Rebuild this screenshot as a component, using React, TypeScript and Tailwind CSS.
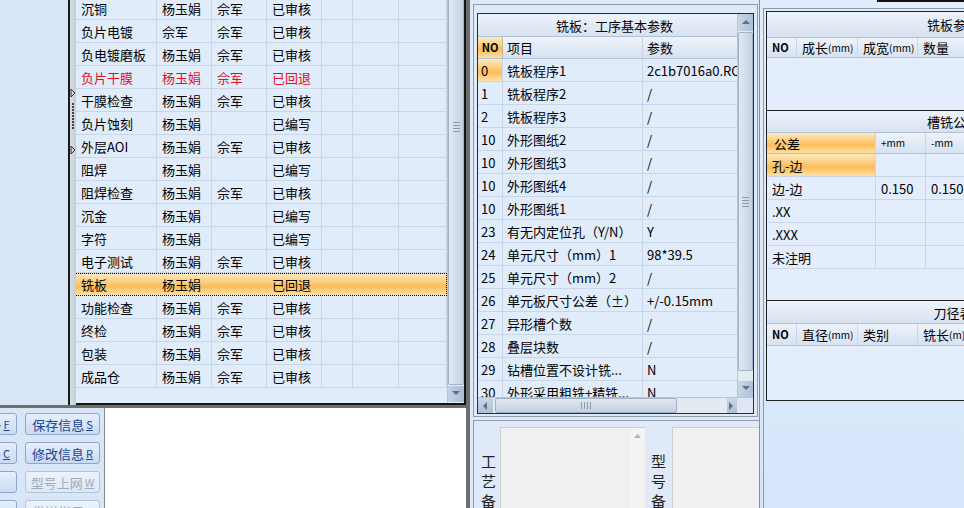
import React from 'react';

type Row = { name: string; a: string; b: string; state: string; red?: boolean; sel?: boolean };

const procRows: Row[] = [
    { name: '沉铜', a: '杨玉娟', b: '佘军', state: '已审核' },
    { name: '负片电镀', a: '佘军', b: '佘军', state: '已审核' },
    { name: '负电镀磨板', a: '杨玉娟', b: '佘军', state: '已审核' },
    { name: '负片干膜', a: '杨玉娟', b: '佘军', state: '已回退', red: true },
    { name: '干膜检查', a: '杨玉娟', b: '佘军', state: '已审核' },
    { name: '负片蚀刻', a: '杨玉娟', b: '', state: '已编写' },
    { name: '外层AOI', a: '杨玉娟', b: '佘军', state: '已审核' },
    { name: '阻焊', a: '杨玉娟', b: '', state: '已编写' },
    { name: '阻焊检查', a: '杨玉娟', b: '佘军', state: '已审核' },
    { name: '沉金', a: '杨玉娟', b: '', state: '已编写' },
    { name: '字符', a: '杨玉娟', b: '', state: '已编写' },
    { name: '电子测试', a: '杨玉娟', b: '佘军', state: '已审核' },
    { name: '铣板', a: '杨玉娟', b: '', state: '已回退', sel: true },
    { name: '功能检查', a: '杨玉娟', b: '佘军', state: '已审核' },
    { name: '终检', a: '杨玉娟', b: '佘军', state: '已审核' },
    { name: '包装', a: '杨玉娟', b: '佘军', state: '已审核' },
    { name: '成品仓', a: '杨玉娟', b: '佘军', state: '已审核' },
];

const params: [string, string, string][] = [
    ['0', '铣板程序1', '2c1b7016a0.RC'],
    ['1', '铣板程序2', '/'],
    ['2', '铣板程序3', '/'],
    ['10', '外形图纸2', '/'],
    ['10', '外形图纸3', '/'],
    ['10', '外形图纸4', '/'],
    ['10', '外形图纸1', '/'],
    ['23', '有无内定位孔（Y/N）', 'Y'],
    ['24', '单元尺寸（mm）1', '98*39.5'],
    ['25', '单元尺寸（mm）2', '/'],
    ['26', '单元板尺寸公差（±）', '+/-0.15mm'],
    ['27', '异形槽个数', '/'],
    ['28', '叠层块数', '/'],
    ['29', '钻槽位置不设计铣...', 'N'],
    ['30', '外形采用粗铣+精铣...', 'N'],
];

const tolRows: [string, string, string][] = [
    ['孔-边', '', ''],
    ['边-边', '0.150', '0.150'],
    ['.XX', '', ''],
    ['.XXX', '', ''],
    ['未注明', '', ''],
];

const line = 'border-[#c9d6ea]';
const orange = 'bg-linear-to-b from-[#fde9bb] via-[#fbbd5a] via-60% to-[#fde0a2]';
const head = 'bg-linear-to-b from-[#eef3fa] to-[#d7e2f1]';

function Tri({ dir, className = '' }: { dir: 'up' | 'down' | 'left' | 'right'; className?: string }) {
    const pts = {
        up: '1,6 5,2 9,6',
        down: '1,2 5,6 9,2',
        left: '6,1 2,5 6,9',
        right: '2,1 6,5 2,9',
    }[dir];
    return (
        <svg width="10" height="10" viewBox="0 0 10 10" className={className}>
            <polygon points={pts} fill="#5d6f8a" />
        </svg>
    );
}

function Grip({ horizontal = false }: { horizontal?: boolean }) {
    return horizontal ? (
        <div className="flex gap-[2px]">
            {[0, 1, 2, 3].map(i => <div key={i} className="w-px h-[7px] bg-[#8a9ab2]" />)}
        </div>
    ) : (
        <div className="flex flex-col gap-[2px]">
            {[0, 1, 2, 3].map(i => <div key={i} className="h-px w-[7px] bg-[#8a9ab2]" />)}
        </div>
    );
}

function Btn({ label, hot, disabled, wide }: { label: string; hot?: string; disabled?: boolean; wide?: boolean }) {
    return (
        <div
            className={`h-[22px] w-[75px] shrink-0 rounded-[3px] border flex items-center justify-center text-[13px] whitespace-nowrap ${
                wide ? '-ml-[58px]' : ''
            } ${
                disabled
                    ? 'border-[#b3c3d8] bg-linear-to-b from-[#edf3fb] to-[#dde7f4] text-[#9eabbc]'
                    : 'border-[#8ea8cb] bg-linear-to-b from-[#e6effc] to-[#c9dbf3] text-[#21458f]'
            }`}
        >
            {label}
            {hot && <span className="underline text-[11px] ml-[2px]">{hot}</span>}
        </div>
    );
}

function ProcessGrid() {
    const cols = ['w-[81px]', 'w-[55px]', 'w-[55px]', 'w-[55px]', 'w-[31px]', 'w-[46px]', 'w-[48px]'];
    return (
        <div className="w-[390px] h-full flex border-r-2 border-b-2 border-[#141414]">
            <div className="w-[371px] h-full overflow-hidden bg-[#e1ecfb]">
                <div className="-mt-[3px]">
                    {procRows.map((r, i) => {
                        const vals = [r.name, r.a, r.b, r.state, '', '', ''];
                        if (r.sel) {
                            return (
                                <div key={i} className={`flex h-[23px] border-y border-r border-dotted border-black ${orange}`}>
                                    {vals.map((v, j) => (
                                        <div key={j} className={`${cols[j]} shrink-0 pl-[5px] flex items-center whitespace-nowrap`}>{v}</div>
                                    ))}
                                </div>
                            );
                        }
                        return (
                            <div key={i} className={`flex h-[23px] border-b ${line} ${r.red ? 'text-[#e2121e]' : ''}`}>
                                {vals.map((v, j) => (
                                    <div key={j} className={`${cols[j]} shrink-0 pl-[5px] flex items-center whitespace-nowrap border-r ${line}`}>{v}</div>
                                ))}
                            </div>
                        );
                    })}
                </div>
            </div>
            <div className="w-[17px] h-full flex flex-col bg-[#e4eaf2] border-l border-[#b7c4d6]">
                <div className="h-[385px] rounded-b-[2px] border-x border-b border-[#9fb0c8] bg-linear-to-r from-[#e3e9f2] to-[#c4d0e0] flex flex-col items-center pt-[122px]">
                    <Grip />
                </div>
                <div className="h-[16px] mt-px bg-linear-to-r from-[#c4d2e6] to-[#a9bbd4] flex items-center justify-center">
                    <Tri dir="down" />
                </div>
            </div>
        </div>
    );
}

function Splitter() {
    return (
        <div className="w-[6px] h-full bg-linear-to-r from-[#d9e1ea] to-[#c2ccd8] flex flex-col items-center">
            <svg width="6" height="70" viewBox="0 0 6 70" className="mt-[88px]">
                <polygon points="1,1 5,5 1,9" fill="none" stroke="#333" strokeWidth="1" />
                {[0, 1, 2, 3, 4, 5, 6, 7, 8].map(i => (
                    <rect key={i} x="2" y={15 + i * 3} width="2" height="2" fill="#444" />
                ))}
                <polygon points="1,58 5,62 1,66" fill="none" stroke="#333" strokeWidth="1" />
            </svg>
        </div>
    );
}

function ParamGrid() {
    return (
        <div className="h-[401px] border border-[#2c2c2c] flex flex-col bg-[#e1ecfb]">
            <div className="h-[383px] flex">
                <div className="w-[259px] overflow-hidden">
                    <div className={`h-[23px] ${head} border-b border-[#b3c1d6] flex items-center justify-center pl-[14px] whitespace-nowrap`}>
                        铣板：工序基本参数
                    </div>
                    <div className={`h-[22px] flex ${head} border-b border-[#b3c1d6]`}>
                        <div className={`w-[25px] shrink-0 ${orange} border-r border-[#c9b58a] flex items-center justify-center text-[11px] font-bold`}>NO</div>
                        <div className={`w-[140px] shrink-0 border-r ${line} pl-[4px] flex items-center`}>项目</div>
                        <div className="w-[94px] shrink-0 pl-[4px] flex items-center">参数</div>
                    </div>
                    {params.map((p, i) => (
                        <div key={i} className={`h-[23px] flex border-b ${line}`}>
                            <div className={`w-[25px] shrink-0 border-r ${line} pl-[3px] flex items-center ${i === 0 ? orange : ''}`}>{p[0]}</div>
                            <div className={`w-[140px] shrink-0 border-r ${line} pl-[4px] flex items-center whitespace-nowrap overflow-hidden`}>{p[1]}</div>
                            <div className="w-[94px] shrink-0 pl-[4px] flex items-center whitespace-nowrap overflow-hidden">{p[2]}</div>
                        </div>
                    ))}
                </div>
                <div className="w-[16px] flex flex-col bg-[#e4eaf2] border-l border-[#b7c4d6]">
                    <div className="h-[17px] bg-linear-to-r from-[#c9d6e8] to-[#aebfd7] flex items-center justify-center">
                        <Tri dir="up" />
                    </div>
                    <div className="h-[339px] mt-px rounded-[2px] border border-[#9fb0c8] bg-linear-to-r from-[#e3e9f2] to-[#c4d0e0] flex items-center justify-center">
                        <Grip />
                    </div>
                    <div className="flex-1" />
                    <div className="h-[16px] bg-linear-to-r from-[#c9d6e8] to-[#aebfd7] flex items-center justify-center">
                        <Tri dir="down" />
                    </div>
                </div>
            </div>
            <div className="h-[16px] flex border-t border-[#b7c4d6]">
                <div className="w-[259px] flex bg-[#e4eaf2]">
                    <div className="w-[15px] bg-linear-to-b from-[#c9d6e8] to-[#aebfd7] flex items-center justify-center">
                        <Tri dir="left" />
                    </div>
                    <div className="w-[182px] ml-[2px] rounded-[2px] border border-[#9fb0c8] bg-linear-to-b from-[#e3e9f2] to-[#c4d0e0] flex items-center justify-center">
                        <Grip horizontal />
                    </div>
                    <div className="flex-1" />
                    <div className="w-[10px] bg-linear-to-b from-[#c9d6e8] to-[#aebfd7] flex items-center justify-end">
                        <Tri dir="right" />
                    </div>
                </div>
                <div className="flex-1 bg-[#dfe7f2]" />
            </div>
        </div>
    );
}

function VLabel({ chars }: { chars: string[] }) {
    return (
        <div className="w-[23px] shrink-0 flex flex-col items-center pt-[26px] gap-[5px] text-[15px] leading-[15px] text-[#222]">
            {chars.map(c => <span key={c} className="h-[15px]">{c}</span>)}
        </div>
    );
}

function Mm({ children }: { children: React.ReactNode }) {
    return <span className="text-[10px]">{children}</span>;
}

function SpecPanel() {
    const c1 = 'w-[30px]';
    const c2 = 'w-[61px]';
    const c3 = 'w-[60px]';
    const hcell = `h-full shrink-0 border-r ${line} flex items-center pl-[5px] whitespace-nowrap`;
    return (
        <div className="w-[374px] h-[390px] border border-[#202020] bg-[#e3edfb] flex flex-col">
            <div className={`h-[25px] shrink-0 ${head} flex items-center justify-center`}>铣板参数</div>
            <div className={`h-[21px] shrink-0 flex ${head} border-y border-[#b3c1d6]`}>
                <div className={`${c1} ${hcell} text-[11px] font-bold`}>NO</div>
                <div className={`${c2} ${hcell}`}>成长<Mm>(mm)</Mm></div>
                <div className={`${c3} ${hcell}`}>成宽<Mm>(mm)</Mm></div>
                <div className={`${c3} ${hcell}`}>数量</div>
                <div className={`${c3} ${hcell}`} />
            </div>
            <div className="h-[53px] shrink-0 border-b border-[#202020]" />

            <div className={`h-[21px] shrink-0 ${head} flex items-center justify-center`}>槽铣公差</div>
            <div className="h-[22px] shrink-0 flex border-y border-[#b3c1d6]">
                <div className={`w-[109px] ${hcell} ${orange} pl-[7px]`}>公差</div>
                <div className={`w-[50px] ${hcell} ${head}`}><Mm>+mm</Mm></div>
                <div className={`w-[50px] ${hcell} ${head}`}><Mm>-mm</Mm></div>
                <div className={`flex-1 ${head}`} />
            </div>
            {tolRows.map((r, i) => (
                <div key={i} className={`h-[23px] shrink-0 flex border-b ${line}`}>
                    <div className={`w-[109px] ${hcell} pl-[4px] ${i === 0 ? orange : ''}`}>{r[0]}</div>
                    <div className={`w-[50px] ${hcell} pl-[3px]`}>{r[1]}</div>
                    <div className={`w-[50px] ${hcell} pl-[3px]`}>{r[2]}</div>
                    <div className="flex-1" />
                </div>
            ))}
            <div className="h-[32px] shrink-0 border-b border-[#202020]" />

            <div className={`h-[22px] shrink-0 ${head} flex items-center justify-center`}>刀径表</div>
            <div className={`h-[23px] shrink-0 flex ${head} border-y border-[#b3c1d6]`}>
                <div className={`${c1} ${hcell} text-[11px] font-bold`}>NO</div>
                <div className={`${c2} ${hcell}`}>直径<Mm>(mm)</Mm></div>
                <div className={`${c3} ${hcell}`}>类别</div>
                <div className={`${c3} ${hcell}`}>铣长<Mm>(m)</Mm></div>
                <div className={`${c3} ${hcell}`} />
            </div>
            <div className="flex-1" />
        </div>
    );
}

export default function App() {
    return (
        <div className="w-[964px] h-[508px] overflow-hidden flex bg-[#dce8f8] text-[13px] text-black font-['Noto_Sans_CJK_SC','Noto_Sans',sans-serif] leading-none">
            {/* left: process list + buttons */}
            <div className="w-[466px] shrink-0 h-full flex flex-col">
                <div className="h-[405px] shrink-0 flex">
                    <div className="w-[70px] h-full bg-[#d9e6f8] border-r-2 border-[#1a1a1a]" />
                    <Splitter />
                    <ProcessGrid />
                </div>
                <div className="h-[3px] shrink-0 bg-[#6e6e6e]" />
                <div className="flex-1 flex">
                    <div className="w-[105px] shrink-0 h-full bg-[#d9e6f8] border-r border-[#8a8a8a] pt-[5px] flex flex-col gap-[7px] overflow-hidden">
                        <div className="flex gap-[8px]">
                            <Btn label="新建型号" hot="F" wide />
                            <Btn label="保存信息" hot="S" />
                        </div>
                        <div className="flex gap-[8px]">
                            <Btn label="复制型号" hot="C" wide />
                            <Btn label="修改信息" hot="R" />
                        </div>
                        <div className="flex gap-[8px]">
                            <Btn label="删除" wide />
                            <Btn label="型号上网" hot="W" disabled />
                        </div>
                        <div className="flex gap-[8px]">
                            <Btn label="打印" wide />
                            <Btn label="发送指示" hot="X" disabled />
                        </div>
                    </div>
                    <div className="flex-1 bg-white" />
                </div>
            </div>

            {/* middle: step parameters */}
            <div className="w-[294px] shrink-0 h-full border-l-4 border-[#6d6d6d] border-r border-r-[#8d8d8d] bg-[#dfe9f7] flex flex-col">
                <div className="h-[413px] shrink-0 mt-[4px] ml-[3px] mr-[1px] border border-[#8d9aab] pt-[8px] px-[3px]">
                    <ParamGrid />
                </div>
                <div className="flex-1 mt-[3px] ml-[3px] border-t border-l border-[#8d9aab] flex pt-[6px] pl-[3px]">
                    <VLabel chars={['工', '艺', '备']} />
                    <div className="w-[145px] shrink-0 h-full bg-[#f0f0f0] border-t border-l border-[#c9cdd3] flex justify-end">
                        <div className="w-[15px] h-full bg-[#f3f3f3] flex justify-center pt-[6px]">
                            <svg width="7" height="5" viewBox="0 0 7 5"><polygon points="0,4 3.5,0 7,4" fill="#b5b5b5" /></svg>
                        </div>
                    </div>
                    <div className="w-[2px]" />
                    <VLabel chars={['型', '号', '备']} />
                    <div className="flex-1 h-full bg-[#f0f0f0] border-t border-l border-[#c9cdd3] ml-[2px]" />
                </div>
            </div>

            {/* right: milling parameters */}
            <div className="flex-1 min-w-0 h-full flex flex-col bg-linear-to-b from-[#e2ecfa] to-[#d6e6fa]">
                <div className="h-[8px] shrink-0 flex">
                    <div className="w-[117px]" />
                    <div className="flex-1 h-[2px] bg-[#111]" />
                </div>
                <div className="flex-1 ml-[3px] border-l border-t border-[#8d9aab] pl-[2px] pt-[2px]">
                    <SpecPanel />
                </div>
            </div>
        </div>
    );
}
